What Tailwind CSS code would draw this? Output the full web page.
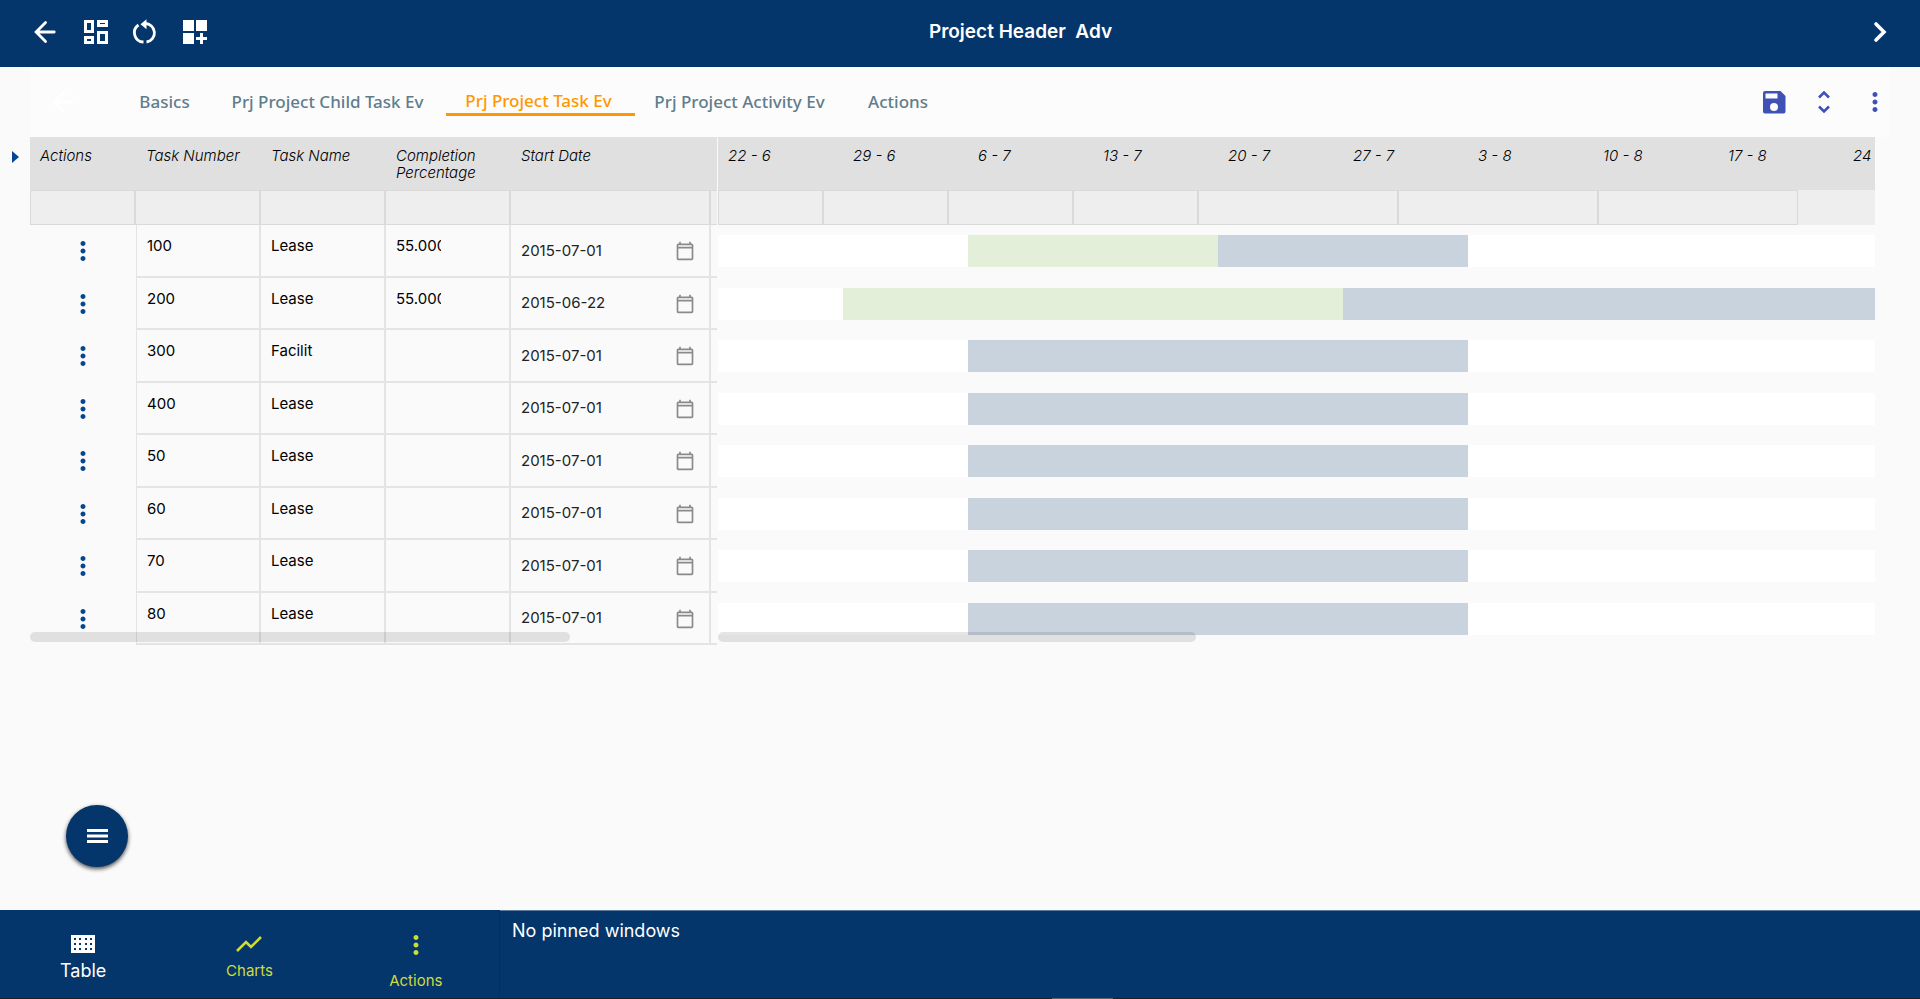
<!DOCTYPE html>
<html lang="en">
<head>
<meta charset="utf-8">
<title>Project Header Adv</title>
<script src="https://cdn.jsdelivr.net/npm/@tailwindcss/browser@4"></script>
</head>
<body class="flex h-screen flex-col overflow-hidden bg-[#fafafa] font-[Inter,sans-serif] text-black">

<svg class="hidden" aria-hidden="true">
  <symbol id="dots" viewBox="0 0 24 24"><path d="M12 8c1.100 0 2-.9 2-2s-.9-2-2-2-2 .9-2 2 .9 2 2 2zm0 2c-1.100 0-2 .9-2 2s.9 2 2 2 2-.9 2-2-.9-2-2-2zm0 6c-1.100 0-2 .9-2 2s.9 2 2 2 2-.9 2-2-.9-2-2-2z"/></symbol>
  <symbol id="back" viewBox="0 0 24 24"><path d="M20.500 12H5M12.500 3.200 3.800 12l8.700 8.800" fill="none" stroke="currentColor" stroke-width="2.600" stroke-linecap="round"/></symbol>
  <symbol id="cal" viewBox="0 0 24 24"><path d="M20 3h-1V1h-2v2H7V1H5v2H4c-1.100 0-2 .9-2 2v16c0 1.100.9 2 2 2h16c1.100 0 2-.9 2-2V5c0-1.100-.9-2-2-2zm0 18H4V9h16v12zm0-14H4V5h16v2z"/></symbol>
</svg>

<header class="flex h-[67px] shrink-0 items-center bg-[#04356b] px-8 pb-[3px] text-white">
  <div class="flex w-[177px] shrink-0 items-center justify-between">
    <button aria-label="Back" class="size-7"><svg class="size-[26px]"><use href="#back"/></svg></button>
    <button aria-label="Dashboard" class="size-7"><svg class="size-7" viewBox="0 0 28 28" fill="none" stroke="currentColor" stroke-width="3"><path d="M3.500 3.500h7v10h-7zM16.500 3.500h8v4h-8zM3.500 19.500h7v5h-7zM16.500 14.500h8v10h-8z"/></svg></button>
    <button aria-label="Reload" class="size-7"><svg class="size-7" viewBox="0 0 28 28" fill="none" stroke="currentColor" stroke-width="2.800"><path d="M7.500 7A9.300 9.300 0 0 0 12.500 24M15.500 24A9.300 9.300 0 0 0 14 5.500"/><path d="M15.500 1.200v10L9.500 6.300z" fill="currentColor" stroke="none"/></svg></button>
    <button aria-label="Add widget" class="size-7"><svg class="size-7" viewBox="0 0 28 28" fill="currentColor"><path d="M2 2h11v11H2zM15 2h11v11H15zM2 15h11v11H2zM19 15h3v4h4v3h-4v4h-3v-4h-4v-3h4z"/></svg></button>
  </div>
  <h1 class="flex-1 pr-8 text-center text-[19px] leading-6 font-semibold whitespace-pre">Project Header  Adv</h1>
  <button aria-label="Next" class="size-6"><svg class="size-6" viewBox="0 0 24 24" fill="none" stroke="currentColor" stroke-width="3.600" stroke-linecap="round"><path d="m12 4 8 8-8 8"/></svg></button>
</header>

<nav class="mx-[30px] flex h-[70px] shrink-0 items-center bg-[#fcfcfc] pl-5 font-['Noto_Sans','Open_Sans',sans-serif] text-[17px] leading-6 font-medium text-[#607d8b]">
  <button aria-label="Previous" class="size-7 text-white"><svg class="size-[26px]"><use href="#back"/></svg></button>
  <a href="#" class="ml-10 w-[93px] text-center">Basics</a>
  <a href="#" class="mr-0.5 w-[233px] text-center whitespace-nowrap">Prj Project Child Task Ev</a>
  <a href="#" class="w-[189px] border-b-[3px] border-[#ff9800] pr-1 text-center whitespace-nowrap text-[#ff9800]">Prj Project Task Ev</a>
  <a href="#" class="w-[209px] text-center whitespace-nowrap">Prj Project Activity Ev</a>
  <a href="#" class="w-[108px] text-center">Actions</a>
  <div class="ml-auto flex items-center gap-[22px] text-[#3f51b5]">
    <button aria-label="Save" class="size-7"><svg class="size-7" viewBox="0 0 28 28"><path d="M5 3h15.500l5 5v15.500a2 2 0 0 1-2 2H5a2 2 0 0 1-2-2V5a2 2 0 0 1 2-2zm.5 2.500v5h12v-5zM14 15a4 4 0 1 0 0 8 4 4 0 0 0 0-8z" fill="currentColor" fill-rule="evenodd"/></svg></button>
    <button aria-label="Expand" class="size-7"><svg class="size-7" viewBox="0 0 28 28" fill="none" stroke="currentColor" stroke-width="2.600"><path d="m9 9.500 5-5 5 5M9 18.500l5 5 5-5"/></svg></button>
    <button aria-label="More" class="size-[30px]"><svg class="size-[30px] fill-current"><use href="#dots"/></svg></button>
  </div>
</nav>

<main class="flex shrink-0 pr-[45px]">
  <button aria-label="Expand side panel" class="mt-3.5 flex h-3 w-[30px] justify-start pl-3 text-[#04468f]"><svg class="h-3 w-[7px]" viewBox="0 0 7 12"><path d="M0 0l7 6-7 6z" fill="currentColor"/></svg></button>

  <section class="relative w-[687px] shrink-0 overflow-hidden">
    <table class="w-full table-fixed border-separate border-spacing-0 text-left text-[15px]">
      <colgroup><col class="w-[106px]"><col class="w-[125px]"><col class="w-[125px]"><col class="w-[125px]"><col class="w-[200px]"><col></colgroup>
      <thead>
        <tr class="h-[53px] bg-[#e0e0e0] align-top leading-[17px] italic *:px-2.5 *:pt-2.5 *:font-light">
          <th scope="col">Actions</th><th scope="col">Task Number</th><th scope="col">Task Name</th><th scope="col">Completion Percentage</th><th scope="col">Start Date</th><td></td>
        </tr>
        <tr class="h-[35px] bg-[#eeeeee] *:border-t *:border-r-2 *:border-b *:border-[#dadada]">
          <td class="border-l"></td><td></td><td></td><td></td><td></td><td class="border-r-0!"></td>
        </tr>
      </thead>
    </table>
    <table id="tasks" aria-label="Tasks" class="h-[420px] w-full table-fixed border-separate border-spacing-0 text-left text-[15px]">
      <colgroup><col class="w-[106px]"><col class="w-[125px]"><col class="w-[125px]"><col class="w-[125px]"><col class="w-[200px]"><col></colgroup>
      <tbody></tbody>
    </table>
    <div class="absolute bottom-[3px] left-0 h-2.5 w-[540px] rounded-full bg-black/10"></div>
  </section>

  <section class="relative ml-px min-w-0 flex-1 overflow-hidden" aria-label="Gantt chart">
    <div class="flex h-[53px] overflow-hidden bg-[#e0e0e0] pt-2.5 text-[15px] leading-[17px] font-light whitespace-nowrap italic *:w-[125px] *:shrink-0 *:pl-2.5">
      <span>22 - 6</span><span>29 - 6</span><span>6 - 7</span><span>13 - 7</span><span>20 - 7</span><span>27 - 7</span><span>3 - 8</span><span>10 - 8</span><span>17 - 8</span><span>24 - 8</span>
    </div>
    <div class="flex h-[35px] bg-[#eeeeee] *:shrink-0 *:border-t *:border-r-2 *:border-b *:border-[#dadada]">
      <div class="w-[106px] border-l"></div><div class="w-[125px]"></div><div class="w-[125px]"></div><div class="w-[125px]"></div><div class="w-[200px]"></div><div class="w-[200px]"></div><div class="w-[199px] border-r!"></div>
    </div>
    <div id="bars" class="flex h-[420px] flex-col"></div>
    <div class="absolute bottom-[3px] left-0 h-2.5 w-[478px] rounded-full bg-black/10"></div>
  </section>
</main>

<div class="flex min-h-0 flex-1 items-end pb-[43px] pl-[66px]">
  <button aria-label="Menu" class="flex size-[62px] items-center justify-center rounded-full bg-[#04356b] text-white shadow-[0_2px_4px_rgba(0,0,0,0.7)]">
    <svg class="h-4 w-[21px]" viewBox="0 0 21 16" fill="currentColor"><path d="M0 1h21v3H0zM0 6.500h21v3H0zM0 12h21v3H0z"/></svg>
  </button>
</div>

<footer class="relative flex h-[89px] shrink-0 border-b border-[#1d1f26] bg-[#04356b]">
  <div class="flex w-[500px] shrink-0 border-r border-[#032e5e] text-[15px] text-[#cddc39] *:flex *:flex-1 *:flex-col *:items-center">
    <button class="pt-[25px] text-white"><svg class="h-[18px] w-6" viewBox="0 0 24 18"><path fill="currentColor" fill-rule="evenodd" d="M0 0h24v18H0zM3 3v2h2V3zm5 0v2h2V3zm6 0v2h2V3zm5 0v2h2V3zM3 8v2h2V8zm5 0v2h2V8zm6 0v2h2V8zm5 0v2h2V8zM3 13v2h2v-2zm5 0v2h2v-2zm6 0v2h2v-2zm5 0v2h2v-2z"/></svg><span class="mt-1.5 text-lg leading-6">Table</span></button>
    <button class="pt-[25px]"><svg class="h-[18px] w-[26px]" viewBox="0 0 26 18" fill="none" stroke="currentColor" stroke-width="2.600"><path d="m1 16 9-9 5 5L25 2"/></svg><span class="mt-1.5 leading-6">Charts</span></button>
    <button class="pt-5"><svg class="size-[30px] fill-current"><use href="#dots"/></svg><span class="mt-[9px] leading-6">Actions</span></button>
  </div>
  <div class="flex-1 border-t border-[#5b7c9f] px-3 pt-2 text-lg leading-6 text-white">No pinned windows</div>
  <div class="absolute -bottom-px left-[1052px] h-px w-[61px] bg-[#5f6168]"></div>
</footer>

<script>
  const rows = [
    { n: '100', name: 'Lease', pct: '55.000', date: '2015-07-01', lead: 250, done: 250, rest: 250 },
    { n: '200', name: 'Lease', pct: '55.000', date: '2015-06-22', lead: 125, done: 500, rest: 700 },
    { n: '300', name: 'Facilit', pct: '', date: '2015-07-01', lead: 250, done: 0, rest: 500 },
    ...['400', '50', '60', '70', '80'].map(n => ({ n, name: 'Lease', pct: '', date: '2015-07-01', lead: 250, done: 0, rest: 500 })),
  ];
  document.querySelector('#tasks tbody').innerHTML = rows.map(r => `
    <tr class="align-top *:p-0">
      <td><div class="flex justify-center pt-[11px]"><button aria-label="Actions for task ${r.n}"><svg class="size-[30px] fill-[#04468f]"><use href="#dots"/></svg></button></div></td>
      <td class="border-r-2 border-b-2 border-l border-[#e4e4e4]"><div class="px-2.5 pt-3 leading-[18px]">${r.n}</div></td>
      <td class="border-r-2 border-b-2 border-[#e4e4e4]"><div class="px-2.5 pt-3 leading-[18px]">${r.name}</div></td>
      <td class="border-r-2 border-b-2 border-[#e4e4e4]"><div class="mt-3 ml-2.5 w-[45px] overflow-hidden leading-[18px]">${r.pct}</div></td>
      <td class="border-r-2 border-b-2 border-[#e4e4e4]"><label class="flex items-center pt-[11px] pr-3.5 pl-2.5"><input aria-label="Start date of task ${r.n}" value="${r.date}" class="h-7 w-0 flex-1 bg-transparent leading-[18px] text-[#222]"><svg class="mt-0.5 size-5 fill-[#8a8a8a]"><use href="#cal"/></svg></label></td>
      <td class="border-b-2 border-[#e4e4e4]"></td>
    </tr>`).join('');
  document.querySelector('#bars').innerHTML = rows.map(r => `
    <div class="flex-1 pt-2.5"><div class="flex h-8 overflow-hidden bg-white">
      <div class="shrink-0" style="width:${r.lead}px"></div>
      <div class="shrink-0 bg-[#e3efd9]" style="width:${r.done}px"></div>
      <div class="shrink-0 bg-[#c9d3dd]" style="width:${r.rest}px"></div>
    </div></div>`).join('');
</script>
</body>
</html>
